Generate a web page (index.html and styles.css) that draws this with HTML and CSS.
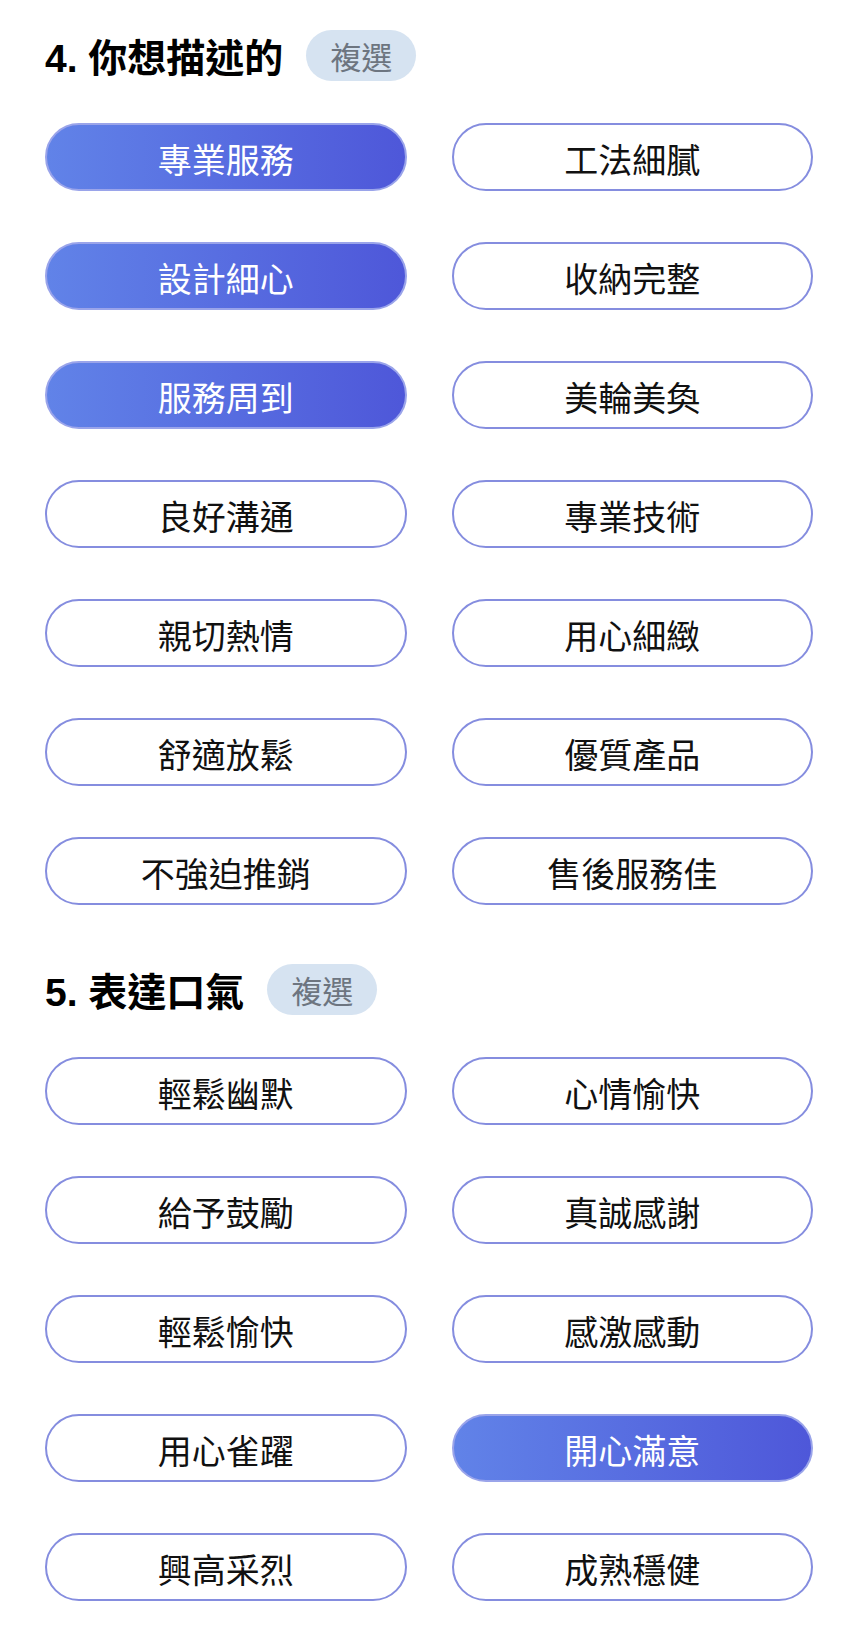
FILE: index.html
```html
<!DOCTYPE html>
<html lang="zh-Hant">
<head>
    <meta charset="UTF-8">
    <meta name="viewport" content="width=device-width, initial-scale=1.0">
    <title>評論標籤</title>
    <link rel="stylesheet" href="styles.css">
</head>
<body>
    <section class="question">
        <div class="question-head">
            <h2>4. 你想描述的</h2>
            <span class="badge">複選</span>
        </div>
        <div class="tag-grid">
            <button class="tag selected">專業服務</button>
            <button class="tag">工法細膩</button>
            <button class="tag selected">設計細心</button>
            <button class="tag">收納完整</button>
            <button class="tag selected">服務周到</button>
            <button class="tag">美輪美奐</button>
            <button class="tag">良好溝通</button>
            <button class="tag">專業技術</button>
            <button class="tag">親切熱情</button>
            <button class="tag">用心細緻</button>
            <button class="tag">舒適放鬆</button>
            <button class="tag">優質產品</button>
            <button class="tag">不強迫推銷</button>
            <button class="tag">售後服務佳</button>
        </div>
    </section>

    <section class="question">
        <div class="question-head">
            <h2>5. 表達口氣</h2>
            <span class="badge">複選</span>
        </div>
        <div class="tag-grid">
            <button class="tag">輕鬆幽默</button>
            <button class="tag">心情愉快</button>
            <button class="tag">給予鼓勵</button>
            <button class="tag">真誠感謝</button>
            <button class="tag">輕鬆愉快</button>
            <button class="tag">感激感動</button>
            <button class="tag">用心雀躍</button>
            <button class="tag selected">開心滿意</button>
            <button class="tag">興高采烈</button>
            <button class="tag">成熟穩健</button>
        </div>
    </section>
</body>
</html>
```

FILE: styles.css
```css
body {
    margin: 0;
    padding: 29px 45px 0;
    background: #fff;
    font-family: 'Liberation Sans', 'Noto Sans CJK TC', sans-serif;
    color: #111;
}

.question + .question {
    margin-top: 58px;
}

.question-head {
    display: flex;
    align-items: center;
    gap: 23px;
    height: 52px;
    margin-bottom: 42px;
}

.question-head h2 {
    margin: 0;
    font-size: 39px;
    font-weight: bold;
    line-height: 1;
    padding-top: 6px;
    color: #000;
}

.badge {
    display: flex;
    align-items: center;
    height: 51px;
    padding: 0 24px;
    border-radius: 26px;
    background-color: #d6e3f1;
    color: #6d7580;
    font-size: 31px;
    font-family: 'Noto Sans CJK TC', sans-serif;
}

.tag-grid {
    display: grid;
    grid-template-columns: 1fr 1fr;
    column-gap: 45px;
    row-gap: 51px;
}

.tag {
    height: 68px;
    padding: 3px 0 0;
    border: 2px solid #858ddf;
    border-radius: 34px;
    background: #fff;
    color: #111;
    font-family: 'Noto Sans CJK TC', sans-serif;
    font-size: 34px;
    line-height: 1;
    cursor: pointer;
}

.tag.selected {
    border-color: #9aa4ea;
    background: linear-gradient(to right, #6183e8, #4e57d9);
    background-origin: border-box;
    color: #fff;
}
```
